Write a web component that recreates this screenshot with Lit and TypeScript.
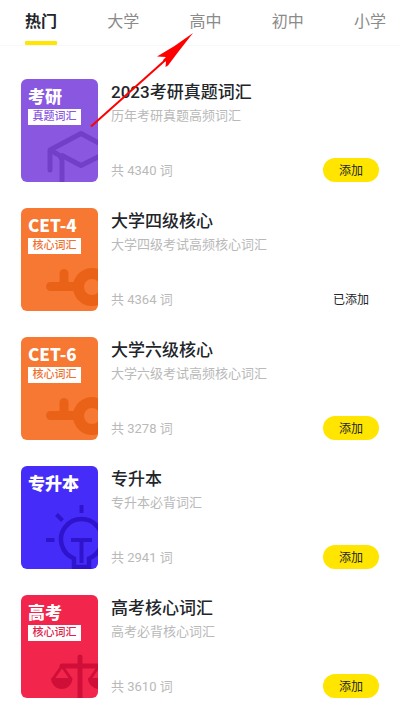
import { LitElement, html, css, svg } from "lit";
import { customElement, property, state } from "lit/decorators.js";
import { classMap } from "lit/directives/class-map.js";

interface Book {
  cover: string;
  tag: string;
  theme: string;
  icon: string;
  title: string;
  desc: string;
  count: number;
  added: boolean;
}

const BOOKS: Book[] = [
  { cover: "考研", tag: "真题词汇", theme: "purple", icon: "cap", title: "2023考研真题词汇", desc: "历年考研真题高频词汇", count: 4340, added: false },
  { cover: "CET-4", tag: "核心词汇", theme: "orange", icon: "key", title: "大学四级核心", desc: "大学四级考试高频核心词汇", count: 4364, added: true },
  { cover: "CET-6", tag: "核心词汇", theme: "orange", icon: "key", title: "大学六级核心", desc: "大学六级考试高频核心词汇", count: 3278, added: false },
  { cover: "专升本", tag: "", theme: "blue", icon: "bulb", title: "专升本", desc: "专升本必背词汇", count: 2941, added: false },
  { cover: "高考", tag: "核心词汇", theme: "red", icon: "scale", title: "高考核心词汇", desc: "高考必背核心词汇", count: 3610, added: false },
];

const TABS = ["热门", "大学", "高中", "初中", "小学"];

const ICONS: Record<string, unknown> = {
  cap: svg`
    <path d="M29 91V71L60 54.5L91 71L60 86.500L41 76.500" stroke-width="5" stroke-linecap="round" stroke-linejoin="round"/>
    <path d="M29 71L37 75.500Q41 78 41 83V104" stroke-width="5"/>`,
  key: svg`
    <path d="M29.500 78.500H56M43 78V65.500" stroke-width="9" stroke-linecap="round"/>
    <circle cx="71" cy="79" r="13.500" stroke-width="11"/>`,
  bulb: svg`
    <path d="M53 101V92.500A20.500 20.500 0 1 1 68 92.500V101Z" stroke-width="4.500"/>
    <path d="M50 74H71M60.500 74V97M60.500 39V47M35.500 48.500L41.500 54.500M25 74H33.500" stroke-width="4"/>`,
  scale: svg`
    <path d="M59 62V104M41 71H80" stroke-width="5" stroke-linecap="round"/>
    <path d="M41 71L32 84M41 71L50 84M78 71L69 84" stroke-width="3"/>
    <path class="solid" d="M30 83H51.500A10.750 11 0 0 1 30 83ZM67 83H89A11 11 0 0 1 67 83Z"/>`,
};

@customElement("book-cover")
export class BookCover extends LitElement {
  @property({ attribute: false }) book!: Book;

  static styles = css`
    :host { display: block; flex: none; }
    .cover {
      position: relative;
      box-sizing: border-box;
      width: 77px;
      height: 103px;
      padding: 5px 7px;
      border-radius: 6px;
      overflow: hidden;
      color: #fff;
    }
    .purple { background: #8957e0; --ink: #7240c8; --tag: #8957e0; }
    .orange { background: #f67832; --ink: #ea6218; --tag: #f07030; }
    .blue { background: #462cf8; --ink: #2e14cc; --tag: #462cf8; }
    .red { background: #f2264c; --ink: #cf0f38; --tag: #e0204a; }
    .art {
      position: absolute;
      inset: 0;
      width: 100%;
      height: 100%;
      fill: none;
      stroke: var(--ink);
    }
    .solid { fill: var(--ink); stroke: none; }
    .name {
      position: relative;
      font-family: "Noto Sans CJK SC", sans-serif;
      font-size: 17px;
      font-weight: 900;
      line-height: 24px;
      white-space: nowrap;
    }
    .tag {
      position: relative;
      width: 53px;
      margin-top: 1px;
      background: #fff;
      color: var(--tag);
      font-size: 11px;
      font-weight: 500;
      line-height: 16px;
      text-align: center;
    }
  `;

  render() {
    const b = this.book;
    return html`<div class=${classMap({ cover: true, [b.theme]: true })}>
      <svg class="art" viewBox="0 0 77 103" aria-hidden="true">${ICONS[b.icon]}</svg>
      <div class="name">${b.cover}</div>
      ${b.tag ? html`<div class="tag">${b.tag}</div>` : ""}
    </div>`;
  }
}

@customElement("app-root")
export class AppRoot extends LitElement {
  @state() private active = 0;
  @state() private books = BOOKS;

  static styles = css`
    :host {
      display: block;
      position: relative;
      background: #fff;
      color: #22252a;
      font-family: Roboto, "Noto Sans CJK SC", sans-serif;
    }
    button {
      border: 0;
      padding: 0;
      background: none;
      font: inherit;
      color: inherit;
      cursor: pointer;
    }
    .tabs {
      display: flex;
      justify-content: space-between;
      padding: 10px 14px 0 25px;
      border-bottom: 1px solid #f8f8f8;
    }
    .tab {
      font-size: 16px;
      line-height: 24px;
      color: #8a8a8a;
    }
    .tab::after {
      content: "";
      display: block;
      height: 4px;
      margin-top: 7px;
      border-radius: 1px;
    }
    .tab.on { font-weight: 700; color: #22252a; }
    .tab.on::after { background: #ffe500; }
    .list {
      display: flex;
      flex-direction: column;
      gap: 26px;
      margin: 0;
      padding: 33px 21px 13px;
      list-style: none;
    }
    .book { display: flex; gap: 13px; }
    .info {
      flex: 1;
      min-width: 0;
      display: flex;
      flex-direction: column;
    }
    .title {
      margin: 0;
      font-size: 17px;
      font-weight: 500;
      line-height: 26px;
    }
    .desc {
      margin: 1px 0 0;
      font-size: 13px;
      line-height: 20px;
      color: #b9b9b9;
    }
    .foot {
      display: flex;
      justify-content: space-between;
      align-items: center;
      margin-top: auto;
    }
    .count { font-size: 13px; line-height: 22px; padding-top: 2px; color: #b9b9b9; }
    .add {
      width: 56px;
      padding-top: 2px;
      border-radius: 12px;
      background: #ffe500;
      font-size: 12px;
      line-height: 22px;
      text-align: center;
    }
    .add.done { background: none; }
    .arrow {
      position: absolute;
      left: 90px;
      top: 32px;
      width: 104px;
      height: 96px;
      fill: #fe0000;
      pointer-events: none;
    }
  `;

  private toggle(i: number) {
    this.books = this.books.map((b, n) => (n === i ? { ...b, added: !b.added } : b));
  }

  render() {
    return html`
      <nav class="tabs">
        ${TABS.map(
          (t, i) => html`<button
            class=${classMap({ tab: true, on: i === this.active })}
            @click=${() => (this.active = i)}
          >${t}</button>`
        )}
      </nav>
      <ul class="list">
        ${this.books.map(
          (b, i) => html`<li class="book">
            <book-cover .book=${b}></book-cover>
            <div class="info">
              <h2 class="title">${b.title}</h2>
              <p class="desc">${b.desc}</p>
              <div class="foot">
                <span class="count">共 ${b.count} 词</span>
                <button class=${classMap({ add: true, done: b.added })} @click=${() => this.toggle(i)}>${b.added ? "已添加" : "添加"}</button>
              </div>
            </div>
          </li>`
        )}
      </ul>
      <svg class="arrow" viewBox="0 0 104 96" aria-hidden="true">
        <path d="M103 1L84.500 14L67 24.500L76 25L73 28L73.500 29L76 29.500L75.500 35L78 33.500L87 21.500Z"/>
        <path d="M1 94.500L76 27.500" stroke="#fe0000" stroke-width="2"/>
      </svg>
    `;
  }
}
